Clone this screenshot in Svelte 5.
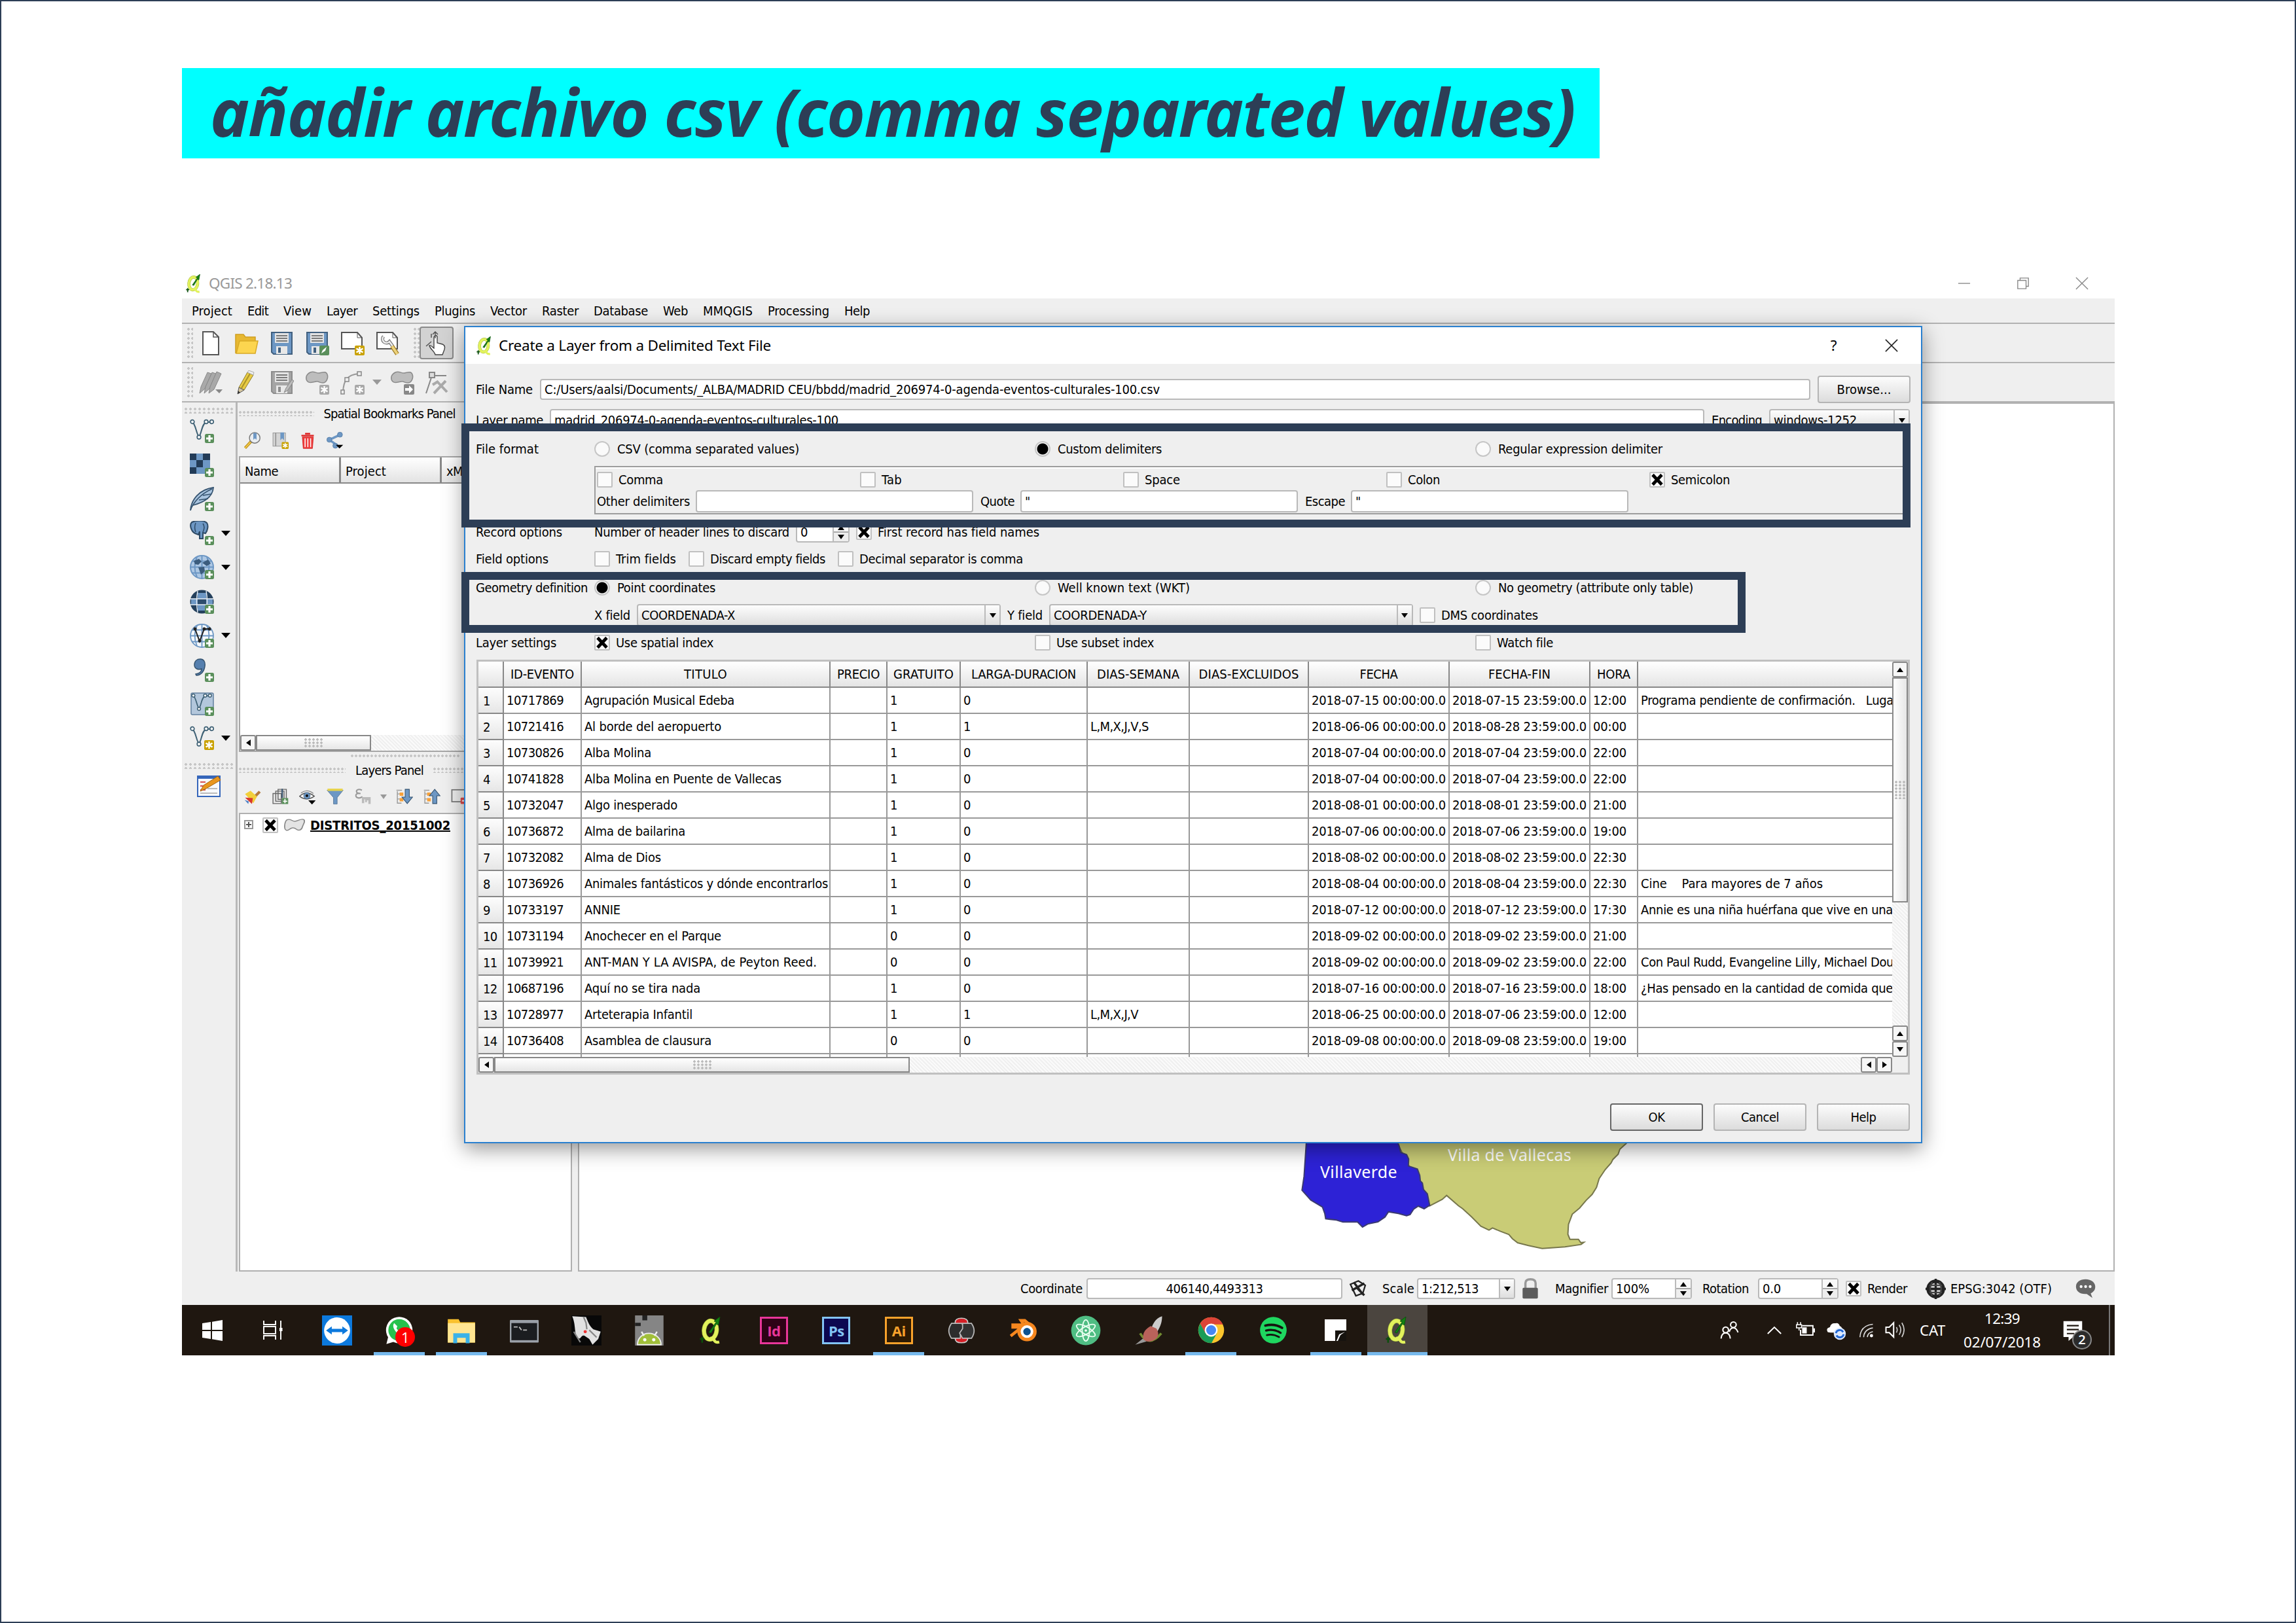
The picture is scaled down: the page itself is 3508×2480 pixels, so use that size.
<script>
  // Adjusts tracking so a label takes exactly the given width in pixels.
  function fit(node, width) {
    if (!width) return;
    node.style.letterSpacing = '0px';
    const natural = node.getBoundingClientRect().width;
    node.style.letterSpacing = (width - natural) / node.textContent.length + 'px';
  }

  const menus = [
    ['Project', 62], ['Edit', 32], ['View', 43], ['Layer', 47], ['Settings', 72], ['Plugins', 62],
    ['Vector', 56], ['Raster', 56], ['Database', 83], ['Web', 38], ['MMQGIS', 76], ['Processing', 94], ['Help', 39]
  ];

  const plus = '<rect x="23" y="23" width="14" height="14" rx="2.5" fill="#5a8f5b"/><path d="M30 25v10M25 30h10" stroke="#fff" stroke-width="3.2"/>';
  const star = '<rect x="22" y="22" width="15" height="15" rx="2" fill="#c9a100"/><path d="M29.500 24v11M24.500 26.500l10 6M34.500 26.500l-10 6" stroke="#fff" stroke-width="2.400"/>';
  const greyStar = '<rect x="22" y="22" width="15" height="15" rx="2" fill="#a8a8a8"/><path d="M29.500 24v11M24.500 26.500l10 6M34.500 26.500l-10 6" stroke="#fff" stroke-width="2.400"/>';
  const vee = '<path d="M3.500 5C9 7 10 24 14 27C18 24 18 6 26 5h8" fill="none" stroke="#3f6175" stroke-width="2"/><g fill="#fff" stroke="#3f6175" stroke-width="1.700"><circle cx="4" cy="4.500" r="2.800"/><circle cx="14" cy="28" r="2.800"/><circle cx="25" cy="4.500" r="2.800"/><circle cx="33.500" cy="4.500" r="2.800"/></g>';
  const disk = (a, b, c) => `<path d="M3 2h31v33H6l-3-3z" fill="${a}" stroke="${b}" stroke-width="2"/><rect x="8" y="3" width="21" height="15" fill="${c}"/><path d="M10 7h17M10 11h17M10 15h17" stroke="#555" stroke-width="1.600"/><rect x="10" y="23" width="17" height="12" fill="#e8e8e8"/><rect x="13" y="25" width="4" height="8" fill="${b}"/>`;
  const globe = '<ellipse cx="18.500" cy="18.500" rx="17.500" ry="17.500"/><path d="M1 18.500h35M4 9.500h29M4 27.500h29M18.500 1v35M11 3Q4 18 11 34M26 3Q33 18 26 34" fill="none"/>';
  const qgis = '<g transform="rotate(6 17 18)"><ellipse cx="17" cy="18" rx="8.500" ry="12.500" fill="none" stroke="#9db33a" stroke-width="6"/><ellipse cx="17" cy="18" rx="8.500" ry="12.500" fill="none" stroke="#e2f25c" stroke-width="4.800"/></g><path d="M17 29c7-1 3 7 12 5" stroke="#e2f25c" stroke-width="4" fill="none"/><path d="M15 21L25 7l-3-1 8-6-2 11-3-1L18 22z" fill="#128012" stroke="#0b4f0b" stroke-width=".8"/><path d="M3 30h6M6 27v8" stroke="#0b4f0b" stroke-width="2.200"/>';
  const poly = '<path d="M8 3c6-3 9 2 14 1s10-3 12 2-1 13-7 13-6-3-10-2S7 20 4 17 0 7 8 3z" fill="#bdbdbd" stroke="#8b8b8b" stroke-width="1.500"/>';

  const icons = {
    qgis,
    newfile: '<path d="M6 1h16l8 8v27H6z" fill="#fff" stroke="#555" stroke-width="2"/><path d="M22 1v8h8" fill="none" stroke="#555" stroke-width="1.500"/>',
    open: '<path d="M2 34V5h12l3 4h15v6" fill="#e7b832" stroke="#cf9f20" stroke-width="1.500"/><path d="M3 34L8 15h28l-4 19z" fill="#fcd54f" stroke="#d9aa26" stroke-width="1.500"/>',
    save: disk('#6d97c4', '#41607f', '#e4e4e4'),
    saveas: disk('#6d97c4', '#41607f', '#e4e4e4') + '<rect x="22" y="22" width="15" height="15" rx="2" fill="#5a8f5b"/><path d="M25 34l2-5 6-5-2 6z" fill="#fff"/>',
    newcomp: '<path d="M2 2h24l7 8v17H2z" fill="#fff" stroke="#555" stroke-width="2"/><path d="M26 2v8h7" fill="none" stroke="#555"/>' + star,
    manager: '<path d="M2 2h24l7 8v17H2z" fill="#fff" stroke="#555" stroke-width="2"/><path d="M26 2v8h7" fill="none" stroke="#555"/><path d="M12 8a6 6 0 1 0 9 8l5 7" stroke="#777" stroke-width="5" fill="none"/><path d="M12 8a6 6 0 1 0 9 8l5 7" stroke="#eee" stroke-width="2.500" fill="none"/><path d="M25 23l8 12" stroke="#a07d25" stroke-width="6.500"/><path d="M25 23l8 12" stroke="#ecd27c" stroke-width="4"/>',
    pan: '<path d="M16 36c-1-5-8-9-9-14 3-1 5 3 7 4V9c1-3 5-3 5 0v9l8 2q5 2 3 8l-3 8z" fill="#fff" stroke="#444" stroke-width="1.400"/><path d="M16 1v10M12 5l4-4 4 4M2 23l8-7M10 4v6" fill="none" stroke="#555" stroke-width="1.500"/>',
    pencils: '<g fill="#a9a9a9" stroke="#888"><path d="M1 35l2-10L13 3l6 2-10 23z"/><path d="M8 35l2-10L20 3l6 2-10 23z"/><path d="M15 35l2-10L27 2l7 3-11 24z"/></g><path d="M25 29h11l-5 6z" fill="#888"/>',
    pencil: '<path d="M7 26L20 3l9 4L15 30z" fill="#e8cb45" stroke="#8b7a2a"/><path d="M11 27L24 5" stroke="#a89228" stroke-width="2"/><path d="M20 3l2-3 8 3-1 4z" fill="#eee" stroke="#aaa"/><path d="M7 26l-2 10 10-6z" fill="#d8c8a0" stroke="#555"/><path d="M5 36l1-5 3 3z" fill="#333"/>',
    saveedit: disk('#a5a5a5', '#8d8d8d', '#e4e4e4') + '<path d="M22 34l3-7 9-13 3 2-9 14z" fill="#bbb" stroke="#888"/>',
    addfeat: poly + greyStar,
    curve: '<path d="M4 33C5 15 10 7 28 5" fill="none" stroke="#999" stroke-width="2"/><g fill="#eee" stroke="#888" stroke-width="1.500"><rect x="1" y="30" width="5" height="6"/><rect x="7" y="11" width="6" height="6"/><rect x="26" y="2" width="6" height="6"/></g>' + greyStar,
    movefeat: poly + '<rect x="21" y="21" width="16" height="16" rx="2" fill="#888"/><path d="M23 27h6v-4l6 6-6 6v-4h-6z" fill="#fff"/>',
    node: '<path d="M1 35L10 8h22" fill="none" stroke="#888" stroke-width="2"/><rect x="6" y="3" width="8" height="8" fill="#ddd" stroke="#888" stroke-width="2"/><path d="M13 35l18-19M17 16l16 17M11 22l8-5" stroke="#aaa" stroke-width="4"/>',
    vector: vee + plus,
    raster: '<rect x="0" y="1" width="31" height="31" fill="#6d97c4"/><path d="M0 1h10v10H0zM20 1h11v10H20zM10 11h10v11H10zM0 22h10v10H0z" fill="#223b57"/>' + plus,
    feather: '<path d="M1 36C2 20 14 4 36 1 35 16 20 24 5 28" fill="#a9c4df" stroke="#35536f" stroke-width="1.800"/><path d="M1 36C5 23 18 10 34 3M14 20l14-2M20 13l12-2" fill="none" stroke="#35536f" stroke-width="1.600"/>' + plus,
    postgis: '<path d="M3 2c6-3 19-3 23 1 3 4 1 12-2 16l-4-1v9h-5V16l-2 5-5-2C2 16-1 6 3 2z" fill="#6d97c4" stroke="#2d4a66" stroke-width="2"/><path d="M9 3c-2 5-2 9 0 14M20 4c3 4 2 9 0 13" fill="none" stroke="#2d4a66" stroke-width="1.500"/>' + plus,
    wms: `<g fill="#aec8e4" stroke="#6d97c4" stroke-width="2">${globe}</g><path d="M6 9l8-3 4 4-5 5-5-1zM19 12l9-5 4 6-6 4zM13 19l9-1 1 7-6 5z" fill="#3b5c7d"/>` + plus,
    wcs: `<ellipse cx="18.500" cy="18.500" rx="18" ry="18" fill="#24405c"/><path d="M12 5h13v27H12zM2 14h33v9H2z" fill="#6d97c4"/><path d="M12 14h13v9H12z" fill="#2d4d6c"/><g fill="none" stroke="#e8eef5" stroke-width="1.400"><path d="M1 14h35M1 23h35M12 2Q9 18 12 35M25 2Q28 18 25 35"/></g>` + plus,
    wfs: `<g fill="#f5f8fb" stroke="#6d97c4" stroke-width="1.800">${globe}</g><path d="M8 8l7 19L22 8h8" fill="none" stroke="#222" stroke-width="2"/><g fill="#222"><circle cx="8" cy="8" r="2.500"/><circle cx="15" cy="26" r="2.500"/><circle cx="22" cy="8" r="2.500"/><circle cx="30" cy="8" r="2.500"/></g>` + plus,
    comma: '<path d="M9 25c6-1 9-3 9-8-5 2-11 0-11-6S11 2 16 2s8 4 7 11c-1 8-6 14-13 14z" fill="#557fae" stroke="#35536f" stroke-width="1.500"/>' + plus,
    virtual: '<rect x="2" y="2" width="34" height="33" rx="2" fill="#b3c7dc" stroke="#62809e" stroke-width="1.500"/><g transform="translate(2 2) scale(.86)">' + vee + '</g>' + plus,
    newvec: vee + star,
    edit: '<rect x="1" y="3" width="34" height="31" fill="#f7f9fd" stroke="#3566ba" stroke-width="2"/><path d="M1 2h34v5H1z" fill="#3566ba"/><path d="M5 12h8M5 18h8M5 24h8" stroke="#d95252" stroke-width="2"/><path d="M5 29h26M16 22h15" stroke="#bbb" stroke-width="2"/><path d="M5 26l5-9L32 3l4 6-22 13z" fill="#e8961f" stroke="#a66310"/>',
    zoombm: '<path d="M2 35l13-14" stroke="#b98d16" stroke-width="6"/><path d="M2 35l12-13" stroke="#f0c74a" stroke-width="3"/><circle cx="23" cy="13" r="11.500" fill="#e9edf1" stroke="#777" stroke-width="2"/><path d="M20 2h7v15l-3.500-3-3.500 3z" fill="#6d97c4"/>',
    addbm: '<path d="M3 2h27v29H3z" fill="#d5d5d5" stroke="#999" stroke-width="1.500"/><path d="M9 2v29" stroke="#888" stroke-width="2"/><path d="M19 1h8v17l-4-4-4 4z" fill="#6d97c4"/>' + star,
    trash: '<path d="M5 8h27M13 4h11" stroke="#d22" stroke-width="3.500"/><path d="M7 11h24l-2 25H9z" fill="#ee3b3b" stroke="#c11"/><path d="M13 14v19M19 14v19M25 14v19" stroke="#fff" stroke-width="2.200"/>',
    share: '<path d="M30 6L6 17l18 13" fill="none" stroke="#6d97c4" stroke-width="5"/><g fill="#6d97c4" stroke="#4d759f"><circle cx="29" cy="6" r="5.500"/><circle cx="6" cy="17" r="5.500"/><circle cx="19" cy="30" r="5.500"/></g><path d="M20 28h16l-8 8z" fill="#000"/>',
    brush: '<path d="M20 22L34 8" stroke="#b47a3c" stroke-width="6"/><path d="M2 13l12-7 14 13-8 14z" fill="#f2cf3a"/><path d="M2 21l17 1-2 13z" fill="#d8382e"/><path d="M1 26l9 3-1 6z" fill="#4a7ec4"/>',
    group: '<g fill="#e8e8e8" stroke="#666" stroke-width="2"><path d="M3 12h18v22H3zM9 7h18v22H9zM14 3h18v22H14z"/></g><path d="M23 2v20" stroke="#35536f" stroke-width="3"/><rect x="22" y="22" width="14" height="13" fill="#5a8f5b"/><path d="M29 24v9M25 29h9" stroke="#fff" stroke-width="2.500"/>',
    eye: '<path d="M1 18Q16 4 33 18Q16 30 1 18z" fill="#fff" stroke="#555" stroke-width="2"/><circle cx="17" cy="17" r="7" fill="#6d97c4" stroke="#35536f"/><circle cx="17" cy="17" r="3" fill="#111"/><path d="M4 11Q17 1 31 12" fill="none" stroke="#888" stroke-width="2"/><path d="M20 27h16l-8 9z" fill="#000"/>',
    filter: '<path d="M1 5h35L23 21v14h-8V21z" fill="#6d97c4" stroke="#45678b"/><path d="M2 4h33" stroke="#e7d34c" stroke-width="5"/>',
    epsilon: '<path d="M17 5C9 1 3 5 6 10c2 2 5 2 8 2-8-1-11 2-10 6 2 5 10 5 14 1" fill="none" stroke="#999" stroke-width="3"/><path d="M17 20h19v15h-5v-8h-3v4h-4v-6h-2v8h-5z" fill="#bbb"/>',
    down: '<path d="M3 7v26h9M3 13h8M3 24h8" fill="none" stroke="#999" stroke-width="2"/><path d="M1 5h12" stroke="#999" stroke-width="2"/><path d="M8 10h8v7H8zM8 22h8v7H8z" fill="#f7a13a"/><path d="M20 3h9v17h7L24.500 34 13 20h7z" fill="#6d97c4" stroke="#35536f" stroke-width="1.500"/>',
    up: '<path d="M3 7v26h9M3 13h8M3 24h8" fill="none" stroke="#999" stroke-width="2"/><path d="M1 5h12" stroke="#999" stroke-width="2"/><path d="M8 10h8v7H8zM8 22h8v7H8z" fill="#f7a13a"/><path d="M20 34h9V17h7L24.500 3 13 17h7z" fill="#6d97c4" stroke="#35536f" stroke-width="1.500"/>',
    remove: '<rect x="2" y="4" width="28" height="26" fill="#eee" stroke="#777" stroke-width="2.500"/><rect x="21" y="21" width="15" height="14" rx="2" fill="#e34b4b"/><path d="M24 28h9" stroke="#fff" stroke-width="3"/>',
    polygon: '<path d="M5 4c6-4 9 3 14 3s10-6 15-4 0 10-1 14-2 9-7 9-5-6-11-5-6 7-11 5S1 8 5 4z" fill="#e3e3e3" stroke="#888" stroke-width="2"/>',
    toggle: '<path d="M3 10l16-7 14 9-5 16-14 5z" fill="none" stroke="#222" stroke-width="3"/><path d="M6 22L31 8M10 6l18 24M17 18l14 14" stroke="#222" stroke-width="4.500"/>',
    lock: '<path d="M10 18V9q0-7 9-7t9 7v9" fill="none" stroke="#999" stroke-width="4"/><rect x="5" y="17" width="27" height="19" rx="2" fill="#5c5c5c"/>',
    crs: '<circle cx="18.500" cy="18.500" r="14" fill="#ccc" stroke="#222" stroke-width="6"/><path d="M18.500 0v37M0 18.500h37" stroke="#222" stroke-width="4"/><path d="M12 6Q5 18 12 31M25 6Q32 18 25 31M7 12h23M7 25h23" fill="none" stroke="#444" stroke-width="2.500"/>',
    bubble: '<path d="M18 2c10 0 17 6 17 13 0 6-3 9-8 12l3 8-10-7C8 29 1 23 1 15S8 2 18 2z" fill="#666"/><g fill="#fff"><circle cx="10" cy="15" r="2.500"/><circle cx="18" cy="15" r="2.500"/><circle cx="26" cy="15" r="2.500"/></g>',
    // Taskbar
    start: '<path d="M3 8l13-2v12H3zM18 5.700L34 3v15H18zM3 20h13v12L3 30zM18 20h16v15l-16-2.700z" fill="#fff"/>',
    taskview: '<g fill="none" stroke="#fff" stroke-width="1.900"><path d="M5 4v6h18V4M5 33v-6h18v6"/><rect x="5" y="13" width="18" height="11"/><path d="M31 4v29"/></g><rect x="29" y="15" width="4.500" height="5" fill="#fff"/>',
    team: '<rect width="37" height="37" fill="#0c79dd"/><circle cx="18.500" cy="18.500" r="16" fill="#fff"/><path d="M5 18.500l7-5v3h13v-3l7 5-7 5v-3H12v3z" fill="#0c79dd"/>',
    whatsapp: '<circle cx="18.500" cy="18" r="17" fill="#fff"/><path d="M2 36l3-12 10 8z" fill="#fff"/><circle cx="18.500" cy="18" r="14" fill="#27c24c"/><path d="M12 9c-3 4 0 9 4 13s8 6 11 3l-4-4-3 1-5-6 1-3z" fill="#fff"/>',
    folder: '<path d="M1 4h14l2 4h19v26H1z" fill="#f9c12e"/><path d="M1 9h35v25H1z" fill="#ffe591"/><path d="M8 35V22h21v13h-5v-7H13v7z" fill="#3bb2e8"/>',
    cmd: '<rect x="0" y="5" width="37" height="29" rx="1" fill="#9aa0a8"/><rect x="2" y="9" width="33" height="22" fill="#1b1d20"/><path d="M5 14h5M12 14l3 4M17 18h5" stroke="#bbb" stroke-width="1.500"/>',
    rhino: '<rect width="37" height="37" fill="#080808"/><path d="M1 1l17 1c2 5 4 11 9 15l9 3-3 9-7 7-4-7-6-4c-4-2-4 5-8 3C3 24 6 12 1 1z" fill="#e2e2e2"/><path d="M15 2l3 7 1 8M3 20l8 13M22 18l9 9" stroke="#888" stroke-width="1.800" fill="none"/><circle cx="17" cy="20" r="2" fill="#e33"/>',
    android: '<rect x="1" width="35" height="37" fill="#858585"/><path d="M10 0h6v6h-6zM1 9h7v4H1z" fill="#222"/><path d="M4 36c0-8 6-14 14-14s15 6 15 14z" fill="#a1bf3a" stroke="#eee" stroke-width="1.500"/><path d="M9 20l3 5M28 20l-3 5" stroke="#eee" stroke-width="2"/><circle cx="13" cy="30" r="2" fill="#fff"/><circle cx="24" cy="30" r="2" fill="#fff"/>',
    knot: '<path d="M10 8q0-6 8.500-6T27 8v4H10z" fill="#d51f26" stroke="#ccc" stroke-width="1.500"/><path d="M10 29q0 6 8.500 6t8.500-6v-4H10z" fill="#d51f26" stroke="#ccc" stroke-width="1.500"/><path d="M5 9h14l3 6-5 6v8H5q-7-10 0-20z" fill="#2d2d2d" stroke="#bbb" stroke-width="1.500"/><path d="M32 9H20v7l-4 6 4 7h12q7-10 0-20z" fill="#333" stroke="#bbb" stroke-width="1.500"/>',
    blender: '<path d="M1 26L16 14H4v-3h15l-4-6h5l14 12" fill="none" stroke="#f5871f" stroke-width="4"/><circle cx="23" cy="20" r="13" fill="#f5871f"/><circle cx="23" cy="20" r="8.500" fill="#fff"/><circle cx="23" cy="20" r="5" fill="#0d5190"/>',
    atom: '<circle cx="18.500" cy="18.500" r="18" fill="#4fbd83"/><g fill="none" stroke="#e8fff0" stroke-width="1.500"><ellipse cx="18.500" cy="18.500" rx="4.500" ry="13"/><ellipse cx="18.500" cy="18.500" rx="4.500" ry="13" transform="rotate(60 18.500 18.500)"/><ellipse cx="18.500" cy="18.500" rx="4.500" ry="13" transform="rotate(120 18.500 18.500)"/></g><circle cx="18.500" cy="18.500" r="1.500" fill="#fff"/>',
    bird: '<path d="M35 1c-9 3-11 10-13 14l7 5C33 14 35 8 35 1z" fill="#ccc"/><path d="M2 36l10-8 4 4z" fill="#999"/><path d="M8 22q11 18 26 0" stroke="#718b31" stroke-width="3" fill="none"/><path d="M12 29q-2-10 9-16l7 3q6 10-4 15-8 3-12-2z" fill="#b9625a"/>',
    chrome: '<circle cx="18.500" cy="18.500" r="17" fill="#fbc52d"/><path d="M4 10a17 17 0 0 1 30 1H18L11 23z" fill="#dc4437"/><path d="M4 10a17 17 0 0 0 15 25.500l7-13-15 0z" fill="#1a9c58"/><circle cx="18.500" cy="18.500" r="8.500" fill="#fff"/><circle cx="18.500" cy="18.500" r="6.500" fill="#4587f4"/>',
    spotify: '<circle cx="18.500" cy="18.500" r="17.500" fill="#1fd760"/><g fill="none" stroke="#16130f" stroke-linecap="round"><path d="M8 12.500q12-3 22 3" stroke-width="3.200"/><path d="M9 19q10-2.500 19 3" stroke-width="2.800"/><path d="M10 25q8-2 16 2.500" stroke-width="2.400"/></g>',
    note: '<path d="M2 2h33v33H2z" fill="#fff"/><path d="M18 19h17L20 35h-2z" fill="#16130f"/><path d="M35 19L25 24l-4 11h14z" fill="#16130f"/><path d="M20 35l4-10 9-4-7 5-4 9z" fill="#fff"/>',
    people: '<g fill="none" stroke="#fff" stroke-width="2.600"><circle cx="26" cy="8" r="5.500"/><path d="M18 22q2-8 8-8t9 9"/><circle cx="11" cy="18" r="5.500"/><path d="M2 35q1-11 9-11t9 11"/></g>',
    chevron: '<path d="M5 25l13.500-13L32 25" fill="none" stroke="#fff" stroke-width="2.600"/>',
    power: '<path d="M12 10h21v18H9V18" fill="none" stroke="#fff" stroke-width="2.500"/><path d="M12 13h9v12h-9z" fill="#fff"/><path d="M34 15h3v8h-3z" fill="#fff"/><path d="M3 3v5M9 3v5M1 8h10v6H1zM6 14v5" stroke="#fff" stroke-width="2" fill="none"/>',
    cloud: '<path d="M3 22q-4-7 4-9 2-8 10-7 6-2 8 5 6 2 5 12H8z" fill="#fff"/><circle cx="25" cy="25" r="11" fill="#dce9ff"/><path d="M18 24a7 7 0 0 1 13-2M32 26a7 7 0 0 1-13 2" stroke="#2068d6" stroke-width="3.500" fill="none"/>',
    wifi: '<g fill="none" stroke="#ddd" stroke-width="2.300"><path d="M4 33Q5 8 32 5M12 33q1-17 20-20M20 33q1-10 12-12"/></g><circle cx="29" cy="30" r="3.500" fill="#fff"/>',
    sound: '<path d="M3 13h6l8-8v26l-8-8H3z" fill="none" stroke="#fff" stroke-width="2.400"/><path d="M22 13q3 5 0 10M27 9q6 9 0 18M32 5q8 13 0 26" fill="none" stroke="#ccc" stroke-width="2"/>',
    notice: '<path d="M2 2h33v28H19l-8 7v-7H2z" fill="#fff"/><path d="M8 10h21M8 17h21M8 24h13" stroke="#1f1710" stroke-width="2.500"/>'
  };

  const bar1 = ['newfile', 'open', 'save', 'saveas', 'newcomp', 'manager'];
  const bar2 = ['pencils', 'pencil', 'saveedit', 'addfeat', 'curve', '', 'movefeat', 'node'];
  const side = [
    ['vector'], ['raster'], ['feather'], ['postgis', 1], ['wms', 1], ['wcs'], ['wfs', 1], ['comma'], ['virtual'], ['newvec', 1]
  ];
  const layerTools = ['brush', 'group', 'eye', 'filter', 'epsilon', '', 'down', 'up', 'remove'];

  const heads = [
    ['', 0], ['ID-EVENTO', 97], ['TITULO', 66], ['PRECIO', 65], ['GRATUITO', 92], ['LARGA-DURACION', 160], ['DIAS-SEMANA', 126],
    ['DIAS-EXCLUIDOS', 153], ['FECHA', 58], ['FECHA-FIN', 95], ['HORA', 51], ['', 0]
  ];
  const rows = [
    ['10717869', 'Agrupación Musical Edeba', 229, '1', '0', '', '2018-07-15', '2018-07-15', '12:00', 'Programa pendiente de confirmación.   Luga', 386],
    ['10721416', 'Al borde del aeropuerto', 209, '1', '1', 'L,M,X,J,V,S', '2018-06-06', '2018-08-28', '00:00', '', 0],
    ['10730826', 'Alba Molina', 102, '1', '0', '', '2018-07-04', '2018-07-04', '22:00', '', 0],
    ['10741828', 'Alba Molina en Puente de Vallecas', 301, '1', '0', '', '2018-07-04', '2018-07-04', '22:00', '', 0],
    ['10732047', 'Algo inesperado', 142, '1', '0', '', '2018-08-01', '2018-08-01', '21:00', '', 0],
    ['10736872', 'Alma de bailarina', 154, '1', '0', '', '2018-07-06', '2018-07-06', '19:00', '', 0],
    ['10732082', 'Alma de Dios', 117, '1', '0', '', '2018-08-02', '2018-08-02', '22:30', '', 0],
    ['10736926', 'Animales fantásticos y dónde encontrarlos', 372, '1', '0', '', '2018-08-04', '2018-08-04', '22:30', 'Cine    Para mayores de 7 años', 278],
    ['10733197', 'ANNIE', 55, '1', '0', '', '2018-07-12', '2018-07-12', '17:30', 'Annie es una niña huérfana que vive en una', 385],
    ['10731194', 'Anochecer en el Parque', 209, '0', '0', '', '2018-09-02', '2018-09-02', '21:00', '', 0],
    ['10739921', 'ANT-MAN Y LA AVISPA, de Peyton Reed.', 355, '0', '0', '', '2018-09-02', '2018-09-02', '22:00', 'Con Paul Rudd, Evangeline Lilly, Michael Dou', 386],
    ['10687196', 'Aquí no se tira nada', 177, '1', '0', '', '2018-07-16', '2018-07-16', '18:00', '¿Has pensado en la cantidad de comida que', 385],
    ['10728977', 'Arteterapia Infantil', 165, '1', '1', 'L,M,X,J,V', '2018-06-25', '2018-07-06', '12:00', '', 0],
    ['10736408', 'Asamblea de clausura', 194, '0', '0', '', '2018-09-08', '2018-09-08', '19:00', '', 0]
  ];

  const tasks = [
    ['team', 0, 46], ['whatsapp', 1, 44], ['folder', 1, 44], ['cmd', 0, 44], ['rhino', 0, 46], ['android', 0, 46], ['qgis', 0, 42],
    ['Id', 0, '#e8369a', '#2e0216'], ['Ps', 0, '#83c4f5', '#0c0750'], ['Ai', 1, '#f9a22b', '#2d1a03'],
    ['knot', 0, 42], ['blender', 0, 42], ['atom', 0, 46], ['bird', 0, 46], ['chrome', 1, 43], ['spotify', 0, 43], ['note', 1, 37]
  ];
</script>

{#snippet t(text, w)}<span class="t" use:fit={w}>{text}</span>{/snippet}
{#snippet ico(name, cls)}<svg class="ico {cls}" viewBox="0 0 37 37">{@html icons[name]}</svg>{/snippet}
{#snippet box(on)}<span class="cb">{#if on}<svg viewBox="0 0 20 20"><path d="M3 2.500L17 17.500M17 2.500L3 17.500" stroke="#000" stroke-width="4.800" /></svg>{/if}</span>{/snippet}
{#snippet check(text, w, on)}<span class="opt">{@render box(on)}{@render t(text, w)}</span>{/snippet}
{#snippet radio(text, w, on)}<span class="opt rad"><i class="rb" class:on></i>{@render t(text, w)}</span>{/snippet}
{#snippet tri(dir)}<i class="tri {dir}"></i>{/snippet}

<div class="page">
  <h1><span use:fit={2085}>añadir archivo csv (comma separated values)</span></h1>

  <div class="screen">
    <div class="wintitle">
      {@render ico('qgis', 's30')}
      <span class="seg grey" use:fit={127}>QGIS 2.18.13</span>
      <span class="grow"></span>
      <svg class="ctl" viewBox="0 0 22 22"><path d="M1 11h20" /></svg>
      <svg class="ctl" viewBox="0 0 22 22"><path d="M2 6h14v14H2zM6 6V2h14v14h-4" /></svg>
      <svg class="ctl" viewBox="0 0 22 22"><path d="M1 1l20 20M21 1L1 21" /></svg>
    </div>
    <div class="menubar">{#each menus as m}{@render t(m[0], m[1])}{/each}</div>
    <div class="toolbar">
      <i class="vgrip"></i>
      {#each bar1 as n}<span class="slot">{@render ico(n, 's37')}</span>{/each}
      <i class="vgrip second"></i>
      <span class="pressed">{@render ico('pan', 's37')}</span>
    </div>
    <div class="toolbar">
      <i class="vgrip"></i>
      {#each bar2 as n}
        {#if n}<span class="slot">{@render ico(n, 's37')}</span>{:else}<span class="slot narrow">{@render tri('down big light')}</span>{/if}
      {/each}
    </div>

    <div class="work">
      <div class="side">
        <i class="hgrip"></i>
        {#each side as s}
          <div class="sideitem">{@render ico(s[0], 's37')}{#if s[1]}{@render tri('down big')}{/if}</div>
        {/each}
        <i class="hgrip low"></i>
        <div class="edit">{@render ico('edit', 's37')}</div>
      </div>

      <div class="panels">
        <div class="ptitle"><i class="dots"></i>{@render t('Spatial Bookmarks Panel', 201)}<i class="dots"></i></div>
        <div class="ptools">
          {#each ['zoombm', 'addbm', 'trash', 'share'] as n}<span class="pslot">{@render ico(n, 's26')}</span>{/each}
        </div>
        <div class="list">
          <div class="lhead"><span>{@render t('Name', 51)}</span><span>{@render t('Project', 62)}</span><span>xMin</span></div>
          <div class="lbody"></div>
          <div class="hscroll"><b class="btn">{@render tri('left')}</b><b class="thumb short"><i class="nub"></i></b></div>
        </div>
        <div class="splitter"><i class="dots"></i></div>
        <div class="ptitle lower"><i class="dots"></i>{@render t('Layers Panel', 104)}<i class="dots"></i></div>
        <div class="ptools lower">
          {#each layerTools as n}
            {#if n}<span class="pslot">{@render ico(n, 's26')}</span>{:else}<span class="pslot tiny">{@render tri('down light')}</span>{/if}
          {/each}
        </div>
        <div class="tree">
          <span class="exp"></span>
          {@render box(true)}
          <svg class="ico poly" viewBox="0 0 37 28" preserveAspectRatio="none">{@html icons.polygon}</svg>
          <span class="layer" use:fit={214}>DISTRITOS_20151002</span>
        </div>
      </div>

      <div class="map">
        <svg class="districts" viewBox="0 0 1568 870" preserveAspectRatio="none">
          <path fill="#c9cc76" stroke="#77774c" d="M500 250L1350 250L1310 318L1288 345L1282 368L1264 392L1258 408L1238 438L1217 480L1208 520L1193 552L1172 580L1150 615L1125 643L1112 690L1110 735L1117 758L1146 758L1154 773L1165 772L1155 782L1100 793L1022 800L975 787L938 774L920 755L908 736L880 722L852 706L840 716L812 698L780 655L750 618L735 604L695 557L680 575L637 605Z" />
          <path fill="#2d22d6" stroke="#3b3b70" d="M218 250L522 300L532 328L538 360L558 370L565 390L564 422L595 436L603 465L605 490L612 500L616 530L629 550L637 602L618 618L598 606L582 620L570 645L558 650L530 640L496 632L484 656L460 678L425 688L407 702L390 679L340 679L318 670L281 664L278 640L270 610L230 578L200 533L207 470Z" />
        </svg>
        <span class="mlabel villaverde" use:fit={118}>Villaverde</span>
        <span class="mlabel vallecas" use:fit={189}>Villa de Vallecas</span>
      </div>
    </div>

    <div class="status">
      {@render t('Coordinate', 95)}
      <span class="inp coord">{@render t('406140,4493313', 148)}</span>
      {@render ico('toggle', 's28')}
      <span class="gap1">{@render t('Scale', 49)}</span>
      <span class="inp combo scale">{@render t('1:212,513', 87)}<b class="drop">{@render tri('down')}</b></span>
      {@render ico('lock', 's33')}
      <span class="gap2">{@render t('Magnifier', 81)}</span>
      <span class="inp spin">{@render t('100%', 51)}<b class="updown">{@render tri('up')}{@render tri('down')}</b></span>
      <span class="gap3">{@render t('Rotation', 71)}</span>
      <span class="inp spin rot">{@render t('0.0', 28)}<b class="updown">{@render tri('up')}{@render tri('down')}</b></span>
      <span class="render">{@render check('Render', 61, true)}</span>
      <span class="crs">{@render ico('crs', 's31')}{@render t('EPSG:3042 (OTF)', 155)}</span>
      {@render ico('bubble', 's33')}
    </div>

    <div class="taskbar">
      <span class="task first">{@render ico('start', 's37')}</span>
      <span class="task view">{@render ico('taskview', 's37')}</span>
      {#each tasks as k}
        <span class="task" class:run={k[1]}>
          {#if k[3]}
            <span class="adobe" style="color:{k[2]};background:{k[3]}">{k[0]}</span>
          {:else}
            <svg class="ico" style="width:{k[2]}px;height:{k[2]}px" viewBox="0 0 37 37">{@html icons[k[0]]}</svg>
          {/if}
          {#if k[0] === 'whatsapp'}<b class="badge">1</b>{/if}
        </span>
      {/each}
      <span class="task run active">{@render ico('qgis', 's42')}</span>
      <span class="grow"></span>
      <span class="tray">{@render ico('people', 's30')}</span>
      <span class="tray t2">{@render ico('chevron', 's28')}</span>
      <span class="tray t3">{@render ico('power', 's30')}</span>
      <span class="tray t3">{@render ico('cloud', 's31')}</span>
      <span class="tray t3">{@render ico('wifi', 's26')}</span>
      <span class="tray t4">{@render ico('sound', 's31')}</span>
      <span class="seg cat" use:fit={39}>CAT</span>
      <span class="clock"><span class="seg" use:fit={54}>12:39</span><span class="seg" use:fit={118}>02/07/2018</span></span>
      <span class="notice">{@render ico('notice', 's33')}<b class="count">2</b></span>
    </div>

    <div class="dialog">
      <div class="dtitle">
        {@render ico('qgis', 's30')}
        <span class="seg" use:fit={416}>Create a Layer from a Delimited Text File</span>
        <span class="grow"></span>
        <span class="seg q">?</span>
        <svg class="x" viewBox="0 0 22 22"><path d="M1 1l20 20M21 1L1 21" /></svg>
      </div>
      <div class="row file">
        {@render t('File Name', 87)}
        <span class="inp fname">{@render t('C:/Users/aalsi/Documents/_ALBA/MADRID CEU/bbdd/madrid_206974-0-agenda-eventos-culturales-100.csv', 940)}</span>
        <span class="button">{@render t('Browse...', 83)}</span>
      </div>
      <div class="row lname">
        {@render t('Layer name', 103)}
        <span class="inp lay">{@render t('madrid_206974-0-agenda-eventos-culturales-100', 434)}</span>
        <span class="enc">{@render t('Encoding', 77)}</span>
        <span class="inp combo cp grad">{@render t('windows-1252', 127)}<b class="drop">{@render tri('down')}</b></span>
      </div>
      <div class="row four">
        {@render t('File format', 96)}
        {@render radio('CSV (comma separated values)', 278, false)}
        {@render radio('Custom delimiters', 159, true)}
        {@render radio('Regular expression delimiter', 251, false)}
      </div>
      <div class="groupbox">
        <div class="delims">
          {@render check('Comma', 68, false)}
          {@render check('Tab', 31, false)}
          {@render check('Space', 54, false)}
          {@render check('Colon', 49, false)}
          {@render check('Semicolon', 90, true)}
        </div>
        <div class="others">
          {@render t('Other delimiters', 142)}<span class="inp od"></span>
          {@render t('Quote', 52)}<span class="inp od">"</span>
          {@render t('Escape', 61)}<span class="inp od">"</span>
        </div>
      </div>
      <div class="row record">
        <span class="lab">{@render t('Record options', 132)}</span>
        {@render t('Number of header lines to discard', 298)}
        <span class="inp spin num">0<b class="updown">{@render tri('up')}{@render tri('down')}</b></span>
        {@render check('First record has field names', 247, true)}
      </div>
      <div class="row fields">
        <span class="lab">{@render t('Field options', 111)}</span>
        {@render check('Trim fields', 92, false)}
        {@render check('Discard empty fields', 176, false)}
        {@render check('Decimal separator is comma', 250, false)}
      </div>
      <div class="row four geom">
        {@render t('Geometry definition', 171)}
        {@render radio('Point coordinates', 150, true)}
        {@render radio('Well known text (WKT)', 202, false)}
        {@render radio('No geometry (attribute only table)', 298, false)}
      </div>
      <div class="row xy">
        <span class="lab"></span>
        {@render t('X field', 55)}
        <span class="inp combo field grad">{@render t('COORDENADA-X', 143)}<b class="drop">{@render tri('down')}</b></span>
        {@render t('Y field', 54)}
        <span class="inp combo field grad">{@render t('COORDENADA-Y', 142)}<b class="drop">{@render tri('down')}</b></span>
        {@render check('DMS coordinates', 148, false)}
      </div>
      <div class="row four settings">
        {@render t('Layer settings', 123)}
        {@render check('Use spatial index', 149, true)}
        {@render check('Use subset index', 149, false)}
        {@render check('Watch file', 86, false)}
      </div>

      <div class="table">
        <div class="grid">
          <div class="tr th">{#each heads as h}<span>{@render t(h[0], h[1])}</span>{/each}</div>
          {#each rows as r, i}
            <div class="tr">
              <span class="num">{i + 1}</span>
              <span>{@render t(r[0], 87)}</span>
              <span>{@render t(r[1], r[2])}</span>
              <span></span>
              <span>{r[3]}</span>
              <span>{r[4]}</span>
              <span>{r[5]}</span>
              <span></span>
              <span>{@render t(r[6] + ' 00:00:00.0', 205)}</span>
              <span>{@render t(r[7] + ' 23:59:00.0', 205)}</span>
              <span>{@render t(r[8], 51)}</span>
              <span>{@render t(r[9], r[10])}</span>
            </div>
          {/each}
          <div class="tr"><span class="num"></span>{#each heads.slice(1) as h}<span></span>{/each}</div>
        </div>
        <div class="vscroll">
          <b class="btn">{@render tri('up')}</b>
          <b class="thumb"><i class="nub v"></i></b>
          <span class="grow"></span>
          <b class="btn">{@render tri('up')}</b>
          <b class="btn">{@render tri('down')}</b>
        </div>
        <div class="hscroll">
          <b class="btn">{@render tri('left')}</b>
          <b class="thumb"><i class="nub"></i></b>
          <span class="grow"></span>
          <b class="btn">{@render tri('left')}</b>
          <b class="btn">{@render tri('right')}</b>
        </div>
      </div>

      <div class="actions">
        <span class="button ok">{@render t('OK', 25)}</span>
        <span class="button">{@render t('Cancel', 58)}</span>
        <span class="button">{@render t('Help', 39)}</span>
      </div>
    </div>

    <div class="mark format"></div>
    <div class="mark geometry"></div>
  </div>
</div>

<style>
  :global(body) { margin: 0; background: #fff; }
  .page, .page * { box-sizing: border-box; }
  .page {
    width: 3508px; height: 2480px; border: 2px solid #2d3e56; padding: 102px 276px 0; background: #fff; overflow: hidden;
    font-family: 'DejaVu Sans Condensed', 'DejaVu Sans', sans-serif; font-stretch: condensed; font-size: 20px; color: #000;
    letter-spacing: -0.6px; line-height: 24px; white-space: nowrap;
  }
  h1 {
    margin: 0; width: 2166px; height: 138px; background: #0ff; color: #2d3e56; padding-left: 43px;
    font: italic 700 101px/132px 'Noto Sans', 'Open Sans', sans-serif;
  }
  h1 span { display: inline-block; }
  .screen { position: relative; margin-top: 168px; width: 2953px; height: 1661px; background: #efefef; display: flex; flex-direction: column; }
  .t { display: inline-block; flex: none; white-space: pre; }
  .seg { font-family: 'Noto Sans', 'Open Sans', sans-serif; font-stretch: normal; font-size: 22.500px; display: inline-block; flex: none; }
  .grey { color: #999; }
  .grow { flex: 1; }
  .ico { display: block; flex: none; }
  .s26 { width: 26px; height: 26px; }
  .s28 { width: 28px; height: 28px; }
  .s30 { width: 29px; height: 29px; }
  .s31 { width: 31px; height: 31px; }
  .s33 { width: 32px; height: 32px; }
  .s37 { width: 37px; height: 37px; }
  .s42 { width: 42px; height: 42px; }

  .wintitle { height: 46px; background: #fff; display: flex; align-items: center; padding: 0 40px 0 4px; flex: none; }
  .wintitle .seg { margin-left: 8px; }
  .ctl { width: 20px; height: 20px; margin-left: 70px; fill: none; stroke: #888; stroke-width: 1.500; }
  .menubar { height: 39px; flex: none; display: flex; align-items: center; gap: 23px; padding-left: 15px; border-bottom: 2px solid #b2b2b2; }
  .toolbar { height: 60px; flex: none; display: flex; align-items: center; border-bottom: 2px solid #b2b2b2; padding-left: 8px; }
  .slot { width: 54px; display: flex; justify-content: center; }
  .narrow { width: 22px; }
  .vgrip { width: 9px; height: 46px; background: radial-gradient(circle at 2px 2px, #c6c6c6 1.800px, transparent 2px) 0 0 / 6px 7px; }
  .second { margin-left: 13px; }
  .pressed { width: 52px; height: 50px; border: 2px solid #8a8a8a; border-radius: 4px; background: #d2d2d2; display: grid; place-items: center; }

  .work { flex: none; height: 1328px; display: flex; }
  .side { width: 85px; border-right: 3px solid #b8b8b8; flex: none; display: flex; flex-direction: column; }
  .hgrip { margin: 8px 4px 0; height: 9px; background: radial-gradient(circle at 2px 2px, #c6c6c6 1.800px, transparent 2px) 0 0 / 7px 6px; flex: none; }
  .hgrip.low { margin-top: 12px; }
  .sideitem { height: 52.200px; display: flex; align-items: center; gap: 11px; padding-left: 12px; flex: none; }
  .edit { padding: 8px 0 0 23px; }
  .panels { width: 511px; flex: none; display: flex; flex-direction: column; padding-left: 2px; }
  .ptitle { height: 34px; display: flex; align-items: center; gap: 15px; flex: none; padding-right: 49px; }
  .ptitle.lower { height: 31px; }
  .dots { flex: 1; height: 8px; background: radial-gradient(circle at 2px 2px, #c6c6c6 1.600px, transparent 2px) 0 0 / 6px 6px; }
  .ptools { height: 48px; display: flex; align-items: center; flex: none; }
  .ptools.lower { height: 50px; }
  .pslot { width: 42px; display: flex; justify-content: center; }
  .tiny { width: 22px; }
  .list { height: 452px; border: 2px solid #a6a6a6; background: #fff; display: flex; flex-direction: column; flex: none; }
  .lhead { height: 40px; display: flex; border-bottom: 2px solid #888; background: linear-gradient(#fff, #e3e3e3); }
  .lhead > span { width: 154px; border-right: 3px solid #888; padding: 9px 0 0 7px; }
  .lbody { flex: 1; }
  .hscroll, .vscroll { background: repeating-linear-gradient(45deg, #f0f0f0 0 2px, #fafafa 2px 4px); display: flex; }
  .hscroll { height: 24px; }
  .btn { width: 24px; height: 24px; border: 2px solid #888; background: #f6f6f6; display: grid; place-items: center; border-radius: 3px; flex: none; }
  .thumb { border: 2px solid #888; background: linear-gradient(#fff, #e6e6e6); display: grid; place-items: center; flex: none; }
  .thumb.short { width: 176px; }
  .nub { width: 28px; height: 14px; background: radial-gradient(circle at 2px 2px, #bbb 1.500px, transparent 2px) 0 0 / 6px 5px; }
  .nub.v { width: 16px; height: 28px; }
  .splitter { height: 12px; display: flex; justify-content: center; align-items: center; flex: none; }
  .splitter .dots { flex: none; width: 168px; height: 4px; }
  .tree { flex: 1; border: 2px solid #b0b0b0; background: #fff; display: flex; align-items: flex-start; padding: 5px 0 0 6px; }
  .exp { width: 14px; height: 14px; border: 2px solid #999; margin: 4px 14px 0 0; background: linear-gradient(#555, #555) center / 8px 2px no-repeat, linear-gradient(#555, #555) center / 2px 8px no-repeat; }
  .poly { width: 32px; height: 20px; margin: 1px 8px 0 9px; }
  .layer { display: inline-block; font-weight: 700; text-decoration: underline; }
  .map { margin-left: 9px; flex: 1; border: 2px solid #b0b0b0; background: #fff; position: relative; }
  .districts { position: absolute; left: 1015px; top: 1024px; width: 700px; height: 290px; }
  .districts path { stroke-width: 2px; vector-effect: non-scaling-stroke; }
  .mlabel { position: absolute; color: #fff; font: 25px/30px 'Noto Sans', sans-serif; font-stretch: normal; }
  .villaverde { left: 1132px; top: 1158px; }
  .vallecas { left: 1327px; top: 1132px; }

  .inp { height: 32px; background: #fff; border: 2px solid #b9b9b9; border-radius: 4px; display: flex; align-items: center; padding-left: 5px; flex: none; }
  .grad { background: linear-gradient(#fdfdfd, #dedede); }
  .combo { justify-content: space-between; }
  .drop { width: 23px; align-self: stretch; border-left: 2px solid #bbb; background: linear-gradient(#fdfdfd, #dedede); display: grid; place-items: center; }
  .spin { justify-content: space-between; width: 123px; }
  .updown { width: 24px; align-self: stretch; border-left: 2px solid #bbb; display: flex; flex-direction: column; justify-content: space-around; align-items: center; background: linear-gradient(#f9f9f9 46%, #aaa 47% 53%, #eee 54%); }
  .tri { width: 0; height: 0; border: 5px solid transparent; display: block; flex: none; }
  .tri.down { border-top: 7px solid #000; border-bottom: 0; }
  .tri.up { border-bottom: 7px solid #000; border-top: 0; }
  .tri.left { border-right: 7px solid #000; border-left: 0; }
  .tri.right { border-left: 7px solid #000; border-right: 0; }
  .tri.big { border-left-width: 7px; border-right-width: 7px; border-top-width: 8px; }
  .tri.light { border-top-color: #999; }
  .status { height: 50px; flex: none; display: flex; align-items: center; padding: 2px 0 0 1281px; }
  .coord { width: 391px; margin: 0 10px 0 6px; justify-content: center; padding: 0; }
  .gap1 { margin: 0 4px 0 23px; }
  .scale { width: 150px; margin-right: 7px; }
  .gap2 { margin: 0 5px 0 22px; }
  .gap3 { margin: 0 14px 0 16px; }
  .render { margin-left: 11px; }
  .crs { display: flex; align-items: center; gap: 7px; margin: 0 36px 0 28px; }

  .taskbar { height: 77px; flex: none; margin-top: auto; background: #1f1710; display: flex; color: #fff; }
  .task { width: 95.400px; display: flex; align-items: center; justify-content: center; position: relative; flex: none; }
  .task.first { width: 93px; }
  .task.view { width: 90px; margin-right: 6px; }
  .task.active { width: 92px; background: #4b453f; }
  .run { background: linear-gradient(#76b9ed, #76b9ed) bottom / 78px 5px no-repeat; }
  .run.active { background: linear-gradient(#76b9ed, #76b9ed) bottom / 92px 5px no-repeat #4b453f; }
  .adobe { width: 43px; height: 42px; border: 3px solid; font: 700 22px/36px 'Open Sans', sans-serif; text-align: center; letter-spacing: -0.5px; }
  .badge { position: absolute; left: 42px; top: 34px; width: 30px; height: 30px; border-radius: 50%; background: #f00; font: 22px/30px 'Open Sans', sans-serif; text-align: center; letter-spacing: 0; }
  .tray { display: flex; align-items: center; width: 30px; justify-content: center; flex: none; }
  .t2 { margin-left: 39px; }
  .t3 { margin-left: 17px; }
  .t4 { margin-left: 12px; }
  .cat { align-self: center; margin-left: 24px; }
  .clock { width: 150px; margin-left: 12px; display: flex; flex-direction: column; align-items: center; padding-top: 9px; gap: 12px; }
  .notice { width: 73px; margin-left: 17px; position: relative; padding-top: 23px; border-right: 2px solid #777; margin-right: 7px; }
  .count { position: absolute; left: 15px; top: 38px; width: 30px; height: 30px; border-radius: 50%; border: 2px solid #888; background: #2b2b2b; font: 600 20px/26px 'Open Sans', sans-serif; text-align: center; letter-spacing: 0; }

  .dialog { position: absolute; left: 431px; top: 88px; width: 2228px; height: 1249px; border: 2px solid #2a80cf; background: #efefef; box-shadow: 0 8px 30px rgba(0, 0, 0, 0.42); }
  .dtitle { height: 56px; background: #fff; display: flex; align-items: center; padding: 0 35px 0 15px; margin-bottom: 14px; }
  .dtitle .seg { margin-left: 7px; }
  .dtitle .q { margin-right: 74px; }
  .x { width: 20px; height: 20px; fill: none; stroke: #222; stroke-width: 1.700; }
  .row { display: flex; align-items: center; padding-left: 16px; }
  .file { height: 50px; }
  .fname { width: 1941px; margin: 0 11px 0 11px; }
  .button { width: 142px; height: 42px; border: 2px solid #b4b4b4; border-radius: 4px; background: linear-gradient(#fcfcfc, #dcdcdc); display: grid; place-items: center; flex: none; }
  .ok { border-color: #666; }
  .lname { height: 44px; }
  .lay { width: 1764px; margin-left: 10px; height: 34px; }
  .enc { margin: 0 11px; }
  .cp { width: 215px; height: 34px; }
  .four { display: grid; grid-template-columns: 181px 673px 673px 1fr; height: 44px; justify-items: start; }
  .opt { display: flex; align-items: center; gap: 9px; }
  .rad { gap: 11px; }
  .cb { width: 24px; height: 24px; border: 2px solid #c0c0c0; border-radius: 2px; background: #fbfbfb; display: block; flex: none; }
  .cb svg { display: block; width: 20px; height: 20px; }
  .rb { width: 24px; height: 24px; border: 2px solid #c6c6c6; border-radius: 50%; background: #fafafa; flex: none; }
  .rb.on { background: radial-gradient(circle, #000 8px, #fafafa 9px); }
  .groupbox { margin: 4px 0 0 197px; height: 74px; border: 2px solid #9d9d9d; border-right: 0; width: 2010px; padding-left: 2px; box-shadow: inset 0 2px #fff; }
  .delims { height: 35px; display: grid; grid-template-columns: repeat(5, 402px); align-items: center; padding-top: 2px; }
  .others { display: flex; align-items: center; }
  .od { width: 424px; height: 34px; margin: 0 11px 0 9px; }
  .record { height: 50px; margin-top: 2px; }
  .lab { width: 181px; flex: none; }
  .num.spin { width: 82px; margin: 0 10px; }
  .fields { height: 31px; }
  .fields .opt { margin-right: 19px; }
  .geom { height: 41px; margin-top: 8px; }
  .xy { height: 44px; }
  .field { width: 556px; margin: 0 10px; height: 34px; }
  .settings { height: 40px; }

  .table { margin: 6px 0 0 17px; width: 2190px; height: 634px; border: 3px solid #c0c0c0; display: grid; grid-template: 604px 24px / 2160px 24px; background: #efefef; }
  .grid { overflow: hidden; background: #fff; }
  .tr { display: grid; grid-template-columns: 39px 119px 380px 87px 112px 194px 156px 182px 215px 215px 73px 388px; height: 40px; }
  .tr > span { border-right: 2px solid #999; border-bottom: 2px solid #999; padding: 7px 0 0 4px; overflow: hidden; white-space: pre; }
  .th > span { display: grid; place-items: center; padding: 0; background: linear-gradient(#fff, #e4e4e4); border-color: #888; }
  .tr > span:last-child { border-right: 0; }
  .tr > .num { background: linear-gradient(#fdfdfd, #e6e6e6); padding: 8px 0 0 7px; border-color: #888; }
  .vscroll { flex-direction: column; }
  .vscroll .thumb { height: 344px; background: linear-gradient(90deg, #fff, #e6e6e6); }
  .table .hscroll .thumb { width: 635px; }
  .actions { display: flex; justify-content: flex-end; gap: 16px; padding-right: 17px; margin-top: 44px; }

  .mark { position: absolute; border: 12px solid #2d3e56; }
  .format { left: 427px; top: 237px; width: 2214px; height: 159px; }
  .geometry { left: 427px; top: 464px; width: 1962px; height: 93px; }
</style>
